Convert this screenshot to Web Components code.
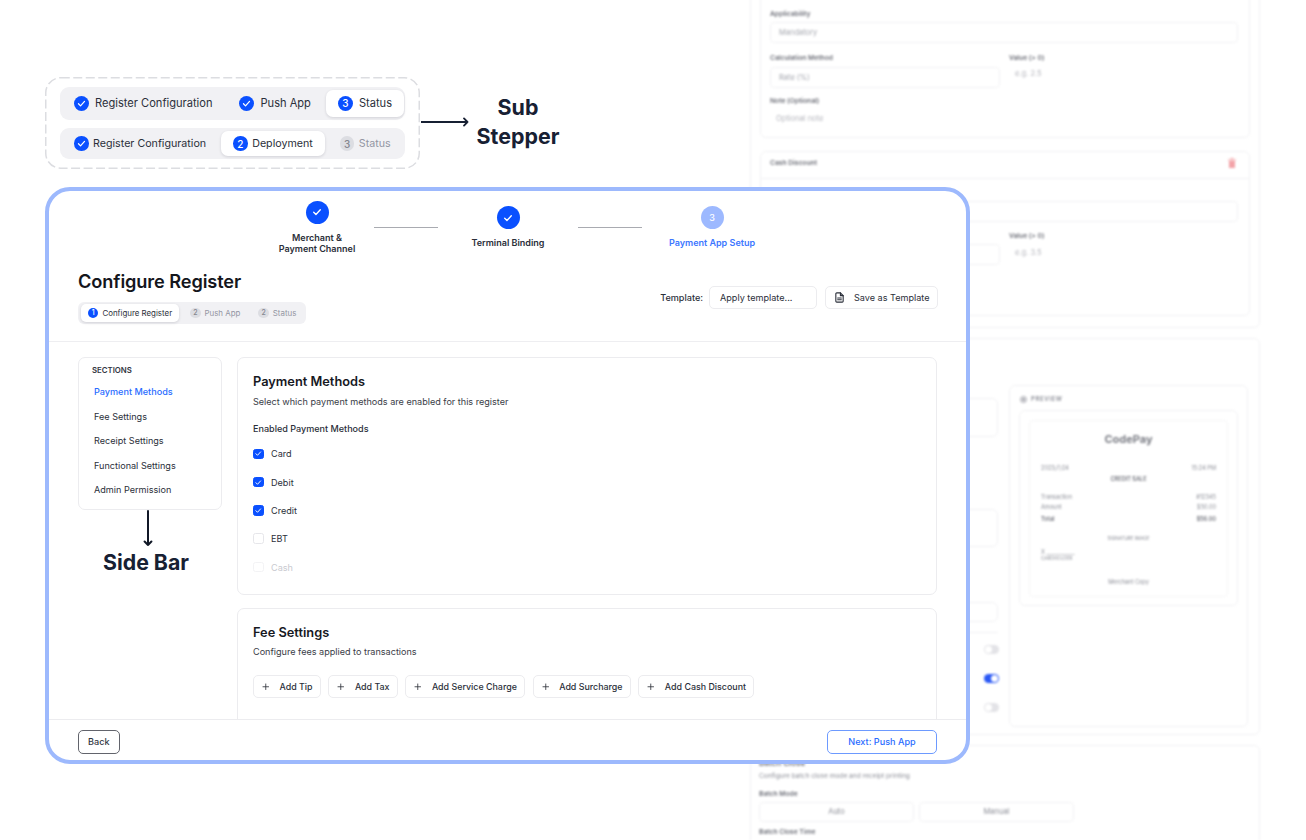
<!DOCTYPE html>
<html lang="en">
<head>
<meta charset="utf-8">
<title>Configure Register</title>
<style>
  html, body { margin: 0; padding: 0; background: #fff; }
  body { width: 1306px; height: 840px; overflow: hidden; position: relative; font-family: "Inter", "Liberation Sans", sans-serif; color: #1b1f29; }
</style>
</head>
<body>
<blurred-backdrop></blurred-backdrop>
<main-stage>
  <annotated-row slot="top">
    <sub-stepper size="large">
      <step-pill state="done">Register Configuration</step-pill>
      <step-pill state="done">Push App</step-pill>
      <step-pill state="active" num="3">Status</step-pill>
    </sub-stepper>
    <sub-stepper size="large" compact>
      <step-pill state="done">Register Configuration</step-pill>
      <step-pill state="active" num="2">Deployment</step-pill>
      <step-pill state="todo" num="3">Status</step-pill>
    </sub-stepper>
  </annotated-row>
  <app-window slot="window"></app-window>
</main-stage>

<script>
const checkSvg = (s) => `<svg width="${s}" height="${s}" viewBox="0 0 16 16" fill="none" stroke="#fff" stroke-width="1.8" stroke-linecap="round" stroke-linejoin="round"><path d="M3.6 8.4l3 3 5.8-6.4"/></svg>`;

class StepPill extends HTMLElement {
  constructor() {
    super();
    const state = this.getAttribute("state");
    const num = this.getAttribute("num") || "";
    this.attachShadow({ mode: "open" }).innerHTML = `
      <style>
        :host { display: flex; align-items: center; gap: var(--pill-gap, 6px); padding: 0 var(--pill-pad, 12px); border-radius: var(--pill-radius, 7px); white-space: nowrap; color: #2b2f3a; }
        :host([state="active"]) { background: #fff; box-shadow: 0 1px 3px rgba(20, 24, 40, .14); }
        :host([state="todo"]) { color: #9396a3; }
        .dot { width: var(--dot, 15px); height: var(--dot, 15px); border-radius: 50%; background: #0a50ff; color: #fff; display: flex; align-items: center; justify-content: center; font-size: var(--dot-font, 10px); font-weight: 500; flex: none; }
        :host([state="todo"]) .dot { background: #dcdde2; color: #84868f; }
      </style>
      <span class="dot">${state === "done" ? checkSvg(11) : num}</span><slot></slot>`;
  }
}
customElements.define("step-pill", StepPill);

class SubStepper extends HTMLElement {
  constructor() {
    super();
    this.attachShadow({ mode: "open" }).innerHTML = `
      <style>
        :host { display: flex; gap: 3px; background: #f1f1f4; border-radius: 9px; font-size: 11.1px; box-sizing: border-box; }
        :host([size="large"]) { width: 345px; height: 33.5px; padding: 3px 2px; }
        :host([size="large"][compact]) { font-size: 10.7px; height: 31px; --dot: 14.5px; --pill-gap: 4.5px; }
        :host([size="small"]) { width: 228px; height: 22px; padding: 2px 3px; gap: 4px; border-radius: 6px; font-size: 7.9px;
          --pill-pad: 7px; --pill-gap: 4px; --dot: 10.4px; --dot-font: 7px; --pill-radius: 5px; }
      </style>
      <slot></slot>`;
  }
}
customElements.define("sub-stepper", SubStepper);

class AnnotatedRow extends HTMLElement {
  constructor() {
    super();
    this.attachShadow({ mode: "open" }).innerHTML = `
      <style>
        :host { display: flex; align-items: center; height: 92px; }
        .dashed { position: relative; width: 375px; height: 92px; box-sizing: border-box; padding: 9.5px 15px 0; display: flex; flex-direction: column; gap: 8px; flex: none; }
        .outline { position: absolute; left: 0; top: 0; }
        .arrow { flex: none; margin: -2px 0 0 1px; }
        .note { width: 100px; margin: -2px 0 0 -1px; text-align: center; font-size: 21.4px; line-height: 29px; font-weight: 700; color: #172033; }
      </style>
      <div class="dashed">
        <svg class="outline" width="375" height="92" fill="none"><rect x=".75" y=".75" width="373.5" height="90.5" rx="15" stroke="#dcdde1" stroke-width="1.5" stroke-dasharray="9 3.5"/></svg>
        <slot></slot>
      </div>
      <svg class="arrow" width="48" height="10" viewBox="0 0 48 10" fill="none" stroke="#172033" stroke-width="1.8" stroke-linecap="round" stroke-linejoin="round"><path d="M0 5h46.5M43 1.4L46.5 5 43 8.6"/></svg>
      <div class="note">Sub<br>Stepper</div>`;
  }
}
customElements.define("annotated-row", AnnotatedRow);

class WizardSteps extends HTMLElement {
  constructor() {
    super();
    this.attachShadow({ mode: "open" }).innerHTML = `
      <style>
        :host { display: flex; align-items: center; height: 53px; margin-left: 211px; padding-top: 10px; font-size: 9.03px; line-height: 11.3px; font-weight: 600; color: #2b2f3a; text-align: center; }
        .step { display: flex; flex-direction: column; align-items: center; gap: 8px; width: 140px; }
        .step.first { width: 114px; }
        .dot { width: 23px; height: 23px; border-radius: 50%; background: #0a50ff; color: #fff; display: flex; align-items: center; justify-content: center; font-size: 9px; font-weight: 500; }
        .next .dot { background: #9db9ff; }
        .next { color: #3d77ff; }
        .line { width: 64px; height: 1px; background: #a9abb1; flex: none; }
      </style>
      <div class="step first"><span class="dot">${checkSvg(12)}</span><span>Merchant &amp;<br>Payment Channel</span></div>
      <div class="line"></div>
      <div class="step"><span class="dot">${checkSvg(12)}</span><span>Terminal Binding</span></div>
      <div class="line"></div>
      <div class="step next"><span class="dot">3</span><span>Payment App Setup</span></div>`;
  }
}
customElements.define("wizard-steps", WizardSteps);

class PageHeader extends HTMLElement {
  constructor() {
    super();
    this.attachShadow({ mode: "open" }).innerHTML = `
      <style>
        :host { display: flex; justify-content: space-between; align-items: flex-start; padding: 0 28px 0 29px; height: 73px; box-sizing: border-box; border-bottom: 1px solid #eeeef1; margin-top: 15px; }
        h1 { margin: 1px 0 9px; font-size: 18.2px; line-height: 23px; font-weight: 600; color: #14161c; letter-spacing: -.1px; }
        .tools { display: flex; align-items: center; gap: 6px; margin-top: 17px; font-size: 9.1px; color: #2b2f3a; }
        .tools b { font-weight: 500; }
        .box { height: 23px; box-sizing: border-box; border: 1px solid #ececef; border-radius: 5px; display: flex; align-items: center; background: #fff; }
        .select { width: 108px; padding-left: 10px; }
        .save { width: 113px; padding-left: 8px; gap: 9px; margin-left: 2px; }
      </style>
      <div>
        <h1>Configure Register</h1>
        <sub-stepper size="small">
          <step-pill state="active" num="1">Configure Register</step-pill>
          <step-pill state="todo" num="2">Push App</step-pill>
          <step-pill state="todo" num="2">Status</step-pill>
        </sub-stepper>
      </div>
      <div class="tools">
        <b>Template:</b>
        <div class="box select">Apply template...</div>
        <div class="box save">
          <svg width="11" height="11" viewBox="0 0 24 24" fill="none" stroke="#2b2f3a" stroke-width="2.4" stroke-linecap="round" stroke-linejoin="round"><path d="M14 2H6a2 2 0 0 0-2 2v16a2 2 0 0 0 2 2h12a2 2 0 0 0 2-2V8z"/><path d="M14 2v6h6"/><path d="M8 13h8M8 17h8"/></svg>
          Save as Template
        </div>
      </div>`;
  }
}
customElements.define("page-header", PageHeader);

class SideBar extends HTMLElement {
  constructor() {
    super();
    const items = ["Payment Methods", "Fee Settings", "Receipt Settings", "Functional Settings", "Admin Permission"];
    this.attachShadow({ mode: "open" }).innerHTML = `
      <style>
        :host { display: flex; flex-direction: column; width: 144px; flex: none; }
        nav { height: 153px; box-sizing: border-box; border: 1px solid #ececef; border-radius: 7px; padding: 6px 0 0 13px; }
        .head { font-size: 7.8px; line-height: 12px; font-weight: 600; color: #33363f; margin-bottom: 4.4px; }
        .item { font-size: 9.1px; line-height: 24.4px; margin-left: 2px; color: #2b2f3a; }
        .item.on { color: #2a6cff; font-weight: 500; }
        .pointer { display: block; margin: 0 0 0 65px; }
        .note { margin: 2px 0 0 -8px; text-align: center; font-size: 21.3px; line-height: 29px; font-weight: 700; color: #172033; }
      </style>
      <nav>
        <div class="head">SECTIONS</div>
        ${items.map((t, i) => `<div class="item${i === 0 ? " on" : ""}">${t}</div>`).join("")}
      </nav>
      <svg class="pointer" width="10" height="36" viewBox="0 0 10 36" fill="none" stroke="#111827" stroke-width="2" stroke-linecap="round" stroke-linejoin="round"><path d="M5 1v34M1.6 31.5L5 35l3.4-3.5"/></svg>
      <div class="note">Side Bar</div>`;
  }
}
customElements.define("side-bar", SideBar);

class CheckRow extends HTMLElement {
  constructor() {
    super();
    this.attachShadow({ mode: "open" }).innerHTML = `
      <style>
        :host { display: flex; align-items: center; gap: 7.5px; height: 28.3px; font-size: 9.1px; color: #2b2f3a; }
        :host([disabled]) { color: #c9cad0; }
        .box { width: 10.5px; height: 10.5px; box-sizing: border-box; border: 1px solid #e6e6ea; border-radius: 2.5px; display: flex; align-items: center; justify-content: center; flex: none; }
        :host([checked]) .box { background: #0a50ff; border-color: #0a50ff; }
        :host([disabled]) .box { border-color: #f3f3f5; }
      </style>
      <span class="box">${this.hasAttribute("checked") ? checkSvg(9) : ""}</span><slot></slot>`;
  }
}
customElements.define("check-row", CheckRow);

class SettingsCard extends HTMLElement {
  constructor() {
    super();
    this.attachShadow({ mode: "open" }).innerHTML = `
      <style>
        :host { display: block; box-sizing: border-box; width: 700px; border: 1px solid #ececef; border-radius: 7px; padding: 15px 15px 0; flex: none; }
        h2 { margin: 0; font-size: 12.8px; line-height: 17px; font-weight: 600; color: #17191f; }
        p { margin: 5.5px 0 0; font-size: 9.08px; line-height: 12px; color: #3a3d47; }
      </style>
      <h2>${this.getAttribute("heading")}</h2>
      <p>${this.getAttribute("note")}</p>
      <slot></slot>`;
  }
}
customElements.define("settings-card", SettingsCard);

class AddButton extends HTMLElement {
  constructor() {
    super();
    this.attachShadow({ mode: "open" }).innerHTML = `
      <style>
        :host { display: flex; align-items: center; gap: 10px; height: 23px; box-sizing: border-box; border: 1px solid #ececef; border-radius: 5px; padding: 0 7px 0 8px; font-size: 8.9px; font-weight: 500; color: #2b2f3a; white-space: nowrap; }
      </style>
      <svg width="7.5" height="7.5" viewBox="0 0 8 8" fill="none" stroke="#33363f" stroke-width=".9"><path d="M4 .6v6.8M.6 4h6.8"/></svg><slot></slot>`;
  }
}
customElements.define("add-button", AddButton);

class AppWindow extends HTMLElement {
  constructor() {
    super();
    this.attachShadow({ mode: "open" }).innerHTML = `
      <style>
        :host { display: flex; flex-direction: column; width: 925px; height: 577px; box-sizing: border-box; border: 4px solid #9db9fd; border-radius: 25px; background: #fff; overflow: hidden; }
        .body { flex: 1; min-height: 0; overflow: hidden; display: flex; gap: 15px; padding: 15px 0 0 29px; }
        .cards { display: flex; flex-direction: column; gap: 12.5px; }
        .pay { height: 238px; }
        .label { margin: 15px 0 5.2px; font-size: 9.05px; line-height: 12px; font-weight: 500; color: #2b2f3a; }
        .fee { height: 240px; }
        .adds { display: flex; gap: 7.8px; margin-top: 17px; }
        footer { height: 41px; flex: none; box-sizing: border-box; border-top: 1px solid #ececef; display: flex; justify-content: space-between; align-items: flex-start; padding: 10px 29px 0 28.5px; font-size: 9.1px; }
        .btn { height: 23.5px; box-sizing: border-box; border-radius: 5px; display: flex; align-items: center; justify-content: center; background: #fff; }
        .back { width: 42.5px; border: 1px solid #62646c; color: #33363f; font-weight: 500; }
        .next { width: 110px; border: 1px solid #6d9aff; color: #2a6cff; font-weight: 500; }
      </style>
      <wizard-steps></wizard-steps>
      <page-header></page-header>
      <div class="body">
        <side-bar></side-bar>
        <div class="cards">
          <settings-card class="pay" heading="Payment Methods" note="Select which payment methods are enabled for this register">
            <div class="label">Enabled Payment Methods</div>
            <check-row checked>Card</check-row>
            <check-row checked>Debit</check-row>
            <check-row checked>Credit</check-row>
            <check-row>EBT</check-row>
            <check-row disabled>Cash</check-row>
          </settings-card>
          <settings-card class="fee" heading="Fee Settings" note="Configure fees applied to transactions">
            <div class="adds">
              <add-button>Add Tip</add-button>
              <add-button>Add Tax</add-button>
              <add-button>Add Service Charge</add-button>
              <add-button>Add Surcharge</add-button>
              <add-button>Add Cash Discount</add-button>
            </div>
          </settings-card>
        </div>
      </div>
      <footer>
        <div class="btn back">Back</div>
        <div class="btn next">Next: Push App</div>
      </footer>`;
  }
}
customElements.define("app-window", AppWindow);

class MainStage extends HTMLElement {
  constructor() {
    super();
    this.attachShadow({ mode: "open" }).innerHTML = `
      <style>
        :host { display: flex; flex-direction: column; gap: 18px; position: relative; padding: 77px 0 0 45px; }
      </style>
      <slot name="top"></slot><slot name="window"></slot>`;
  }
}
customElements.define("main-stage", MainStage);

// blurred page behind the window, sits under everything
class BlurredBackdrop extends HTMLElement {
  constructor() {
    super();
    this.attachShadow({ mode: "open" }).innerHTML = `
      <style>
        :host { position: absolute; left: 750px; top: -20px; width: 510px; height: 860px; overflow: hidden; filter: blur(1.1px); font-size: 7.5px; line-height: 10px; color: #8b8d96; display: flex; flex-direction: column; gap: 10px; }
        .sec { box-sizing: border-box; border: 1px solid #f1f1f3; border-radius: 6px; flex: none; }
        .inner { border: 1px solid #f1f1f3; border-radius: 6px; box-sizing: border-box; }
        .lab { font-size: 6.7px; font-weight: 600; color: #6d6f78; }
        .b { font-weight: 600; color: #6d6f78; }
        .inp { height: 21px; box-sizing: border-box; border: 1px solid #f1f1f3; border-radius: 4px; padding-left: 8px; display: flex; align-items: center; color: #a5a7af; }
        .s1 { height: 348px; padding: 10px 9px 0; display: flex; flex-direction: column; gap: 13px; }
        .c1 { height: 147px; padding: 17px 9px 0; }
        .c2 { height: 165px; }
        .c2head { height: 27px; border-bottom: 1px solid #f1f1f3; padding: 0 13px 4px 9px; display: flex; justify-content: space-between; align-items: center; box-sizing: border-box; }
        .c2body { padding: 22px 9px 0; }
        .split { display: grid; grid-template-columns: 230px auto; gap: 9px; }
        .hint { color: #b4b5bc; }
        .s2 { height: 397px; display: flex; padding: 46px 9px 0 0; gap: 10px; }
        .left { width: 248px; flex: none; display: flex; flex-direction: column; align-items: flex-end; padding-top: 13px; }
        .blk { width: 247px; margin-right: 1px; border: 1px solid #f1f1f3; border-radius: 6px; box-sizing: border-box; }
        .rule { width: 247px; margin-right: 1px; height: 1px; background: #f1f1f3; margin-top: 10px; margin-bottom: 10px; }
        .tog { width: 15px; height: 9px; border-radius: 5px; background: #e3e3e7; margin: 0 0 20px; position: relative; }
        .tog::after { content: ""; position: absolute; left: 1px; top: 1px; width: 7px; height: 7px; border-radius: 50%; background: #fff; }
        .tog.on { background: #2a58f5; }
        .tog.on::after { left: 7px; }
        .prev { width: 239px; height: 342px; box-sizing: border-box; border: 1px solid #f1f1f3; border-radius: 6px; padding: 9px 9px 0; }
        .prevhead { display: flex; align-items: center; gap: 4px; font-size: 6px; letter-spacing: .6px; font-weight: 600; height: 8px; margin-left: 1px; }
        .slip { margin-top: 7px; height: 196px; border: 1px solid #f1f1f3; border-radius: 6px; box-sizing: border-box; padding: 9px 9px 0; }
        .paper { height: 177px; border: 1px solid #f5f5f6; border-radius: 4px; box-sizing: border-box; padding: 0 11px; font-size: 5.6px; line-height: 8px; }
        .brand { text-align: center; font-size: 11px; line-height: 14px; font-weight: 700; color: #7b7d85; margin-top: 11px; }
        .row { display: flex; justify-content: space-between; }
        .ctr { text-align: center; }
        .s3 { height: 200px; padding: 12px 8px 0; color: #8b8d96; }
        .seg { display: flex; gap: 5px; margin: 3px 0 5px; }
        .seg div { width: 155px; height: 20px; border: 1px solid #f1f1f3; border-radius: 4px; box-sizing: border-box; display: flex; align-items: center; justify-content: center; }
      </style>
      <section class="sec s1">
        <div class="inner c1">
          <div class="lab">Applicability</div>
          <div class="inp" style="margin:3px 0 10px;width:468px">Mandatory</div>
          <div class="split">
            <div><div class="lab">Calculation Method</div><div class="inp" style="margin-top:4px">Rate (%)</div></div>
            <div><div class="lab">Value (&gt; 0)</div><div class="hint" style="margin:6px 0 0 6px">e.g. 2.5</div></div>
          </div>
          <div class="lab" style="margin-top:8px">Note (Optional)</div>
          <div class="hint" style="margin:8px 0 0 6px">Optional note</div>
        </div>
        <div class="inner c2">
          <div class="c2head">
            <span class="lab">Cash Discount</span>
            <svg width="8" height="10" viewBox="0 0 8 10" fill="#f3a3a8"><path d="M0 1.5h8v1H0zM1 3h6v7H1zM2.5 0h3v1h-3z"/></svg>
          </div>
          <div class="c2body">
            <div class="inp" style="width:468px;margin-bottom:9px"></div>
            <div class="split">
              <div><div class="inp" style="margin-top:13px"></div></div>
              <div><div class="lab">Value (&gt; 0)</div><div class="hint" style="margin:7px 0 0 6px">e.g. 3.5</div></div>
            </div>
          </div>
        </div>
      </section>
      <section class="sec s2">
        <div class="left">
          <div class="blk" style="height:39px;margin-bottom:72px"></div>
          <div class="blk" style="height:38px;margin-bottom:55px"></div>
          <div class="blk" style="height:20px"></div>
          <div class="rule"></div>
          <div class="tog" style="margin-top:2px"></div>
          <div class="tog on"></div>
          <div class="tog"></div>
        </div>
        <div class="prev">
          <div class="prevhead">
            <svg width="7" height="7" viewBox="0 0 8 8" fill="none" stroke="#8b8d96" stroke-width="1"><circle cx="4" cy="4" r="3.4"/><circle cx="4" cy="4" r="1.2" fill="#8b8d96"/></svg>
            PREVIEW
          </div>
          <div class="slip">
            <div class="paper">
              <div class="brand">CodePay</div>
              <div class="row" style="margin-top:18px"><span>2023/7/24</span><span>15:24 PM</span></div>
              <div class="ctr b" style="margin-top:3px">CREDIT SALE</div>
              <div class="row" style="margin-top:10px"><span>Transaction</span><span>#12345</span></div>
              <div class="row" style="margin-top:2px"><span>Amount</span><span>$50.00</span></div>
              <div class="row b" style="margin-top:4px"><span>Total</span><span>$56.00</span></div>
              <div class="ctr" style="margin-top:12px;font-size:4.6px">SIGNATURE IMAGE</div>
              <div style="margin-top:5.5px;line-height:7px">X ___________</div>
              <div style="font-size:4.6px;line-height:6px">CARDHOLDER</div>
              <div class="ctr" style="margin-top:16.5px">Merchant Copy</div>
            </div>
          </div>
        </div>
      </section>
      <section class="sec s3">
        <div class="lab" style="font-size:8px">Batch Close</div>
        <div style="margin-top:3px;font-size:6.6px">Configure batch close mode and receipt printing</div>
        <div class="lab" style="margin-top:8px">Batch Mode</div>
        <div class="seg"><div>Auto</div><div>Manual</div></div>
        <div class="lab">Batch Close Time</div>
      </section>`;
  }
}
customElements.define("blurred-backdrop", BlurredBackdrop);
</script>
</body>
</html>
